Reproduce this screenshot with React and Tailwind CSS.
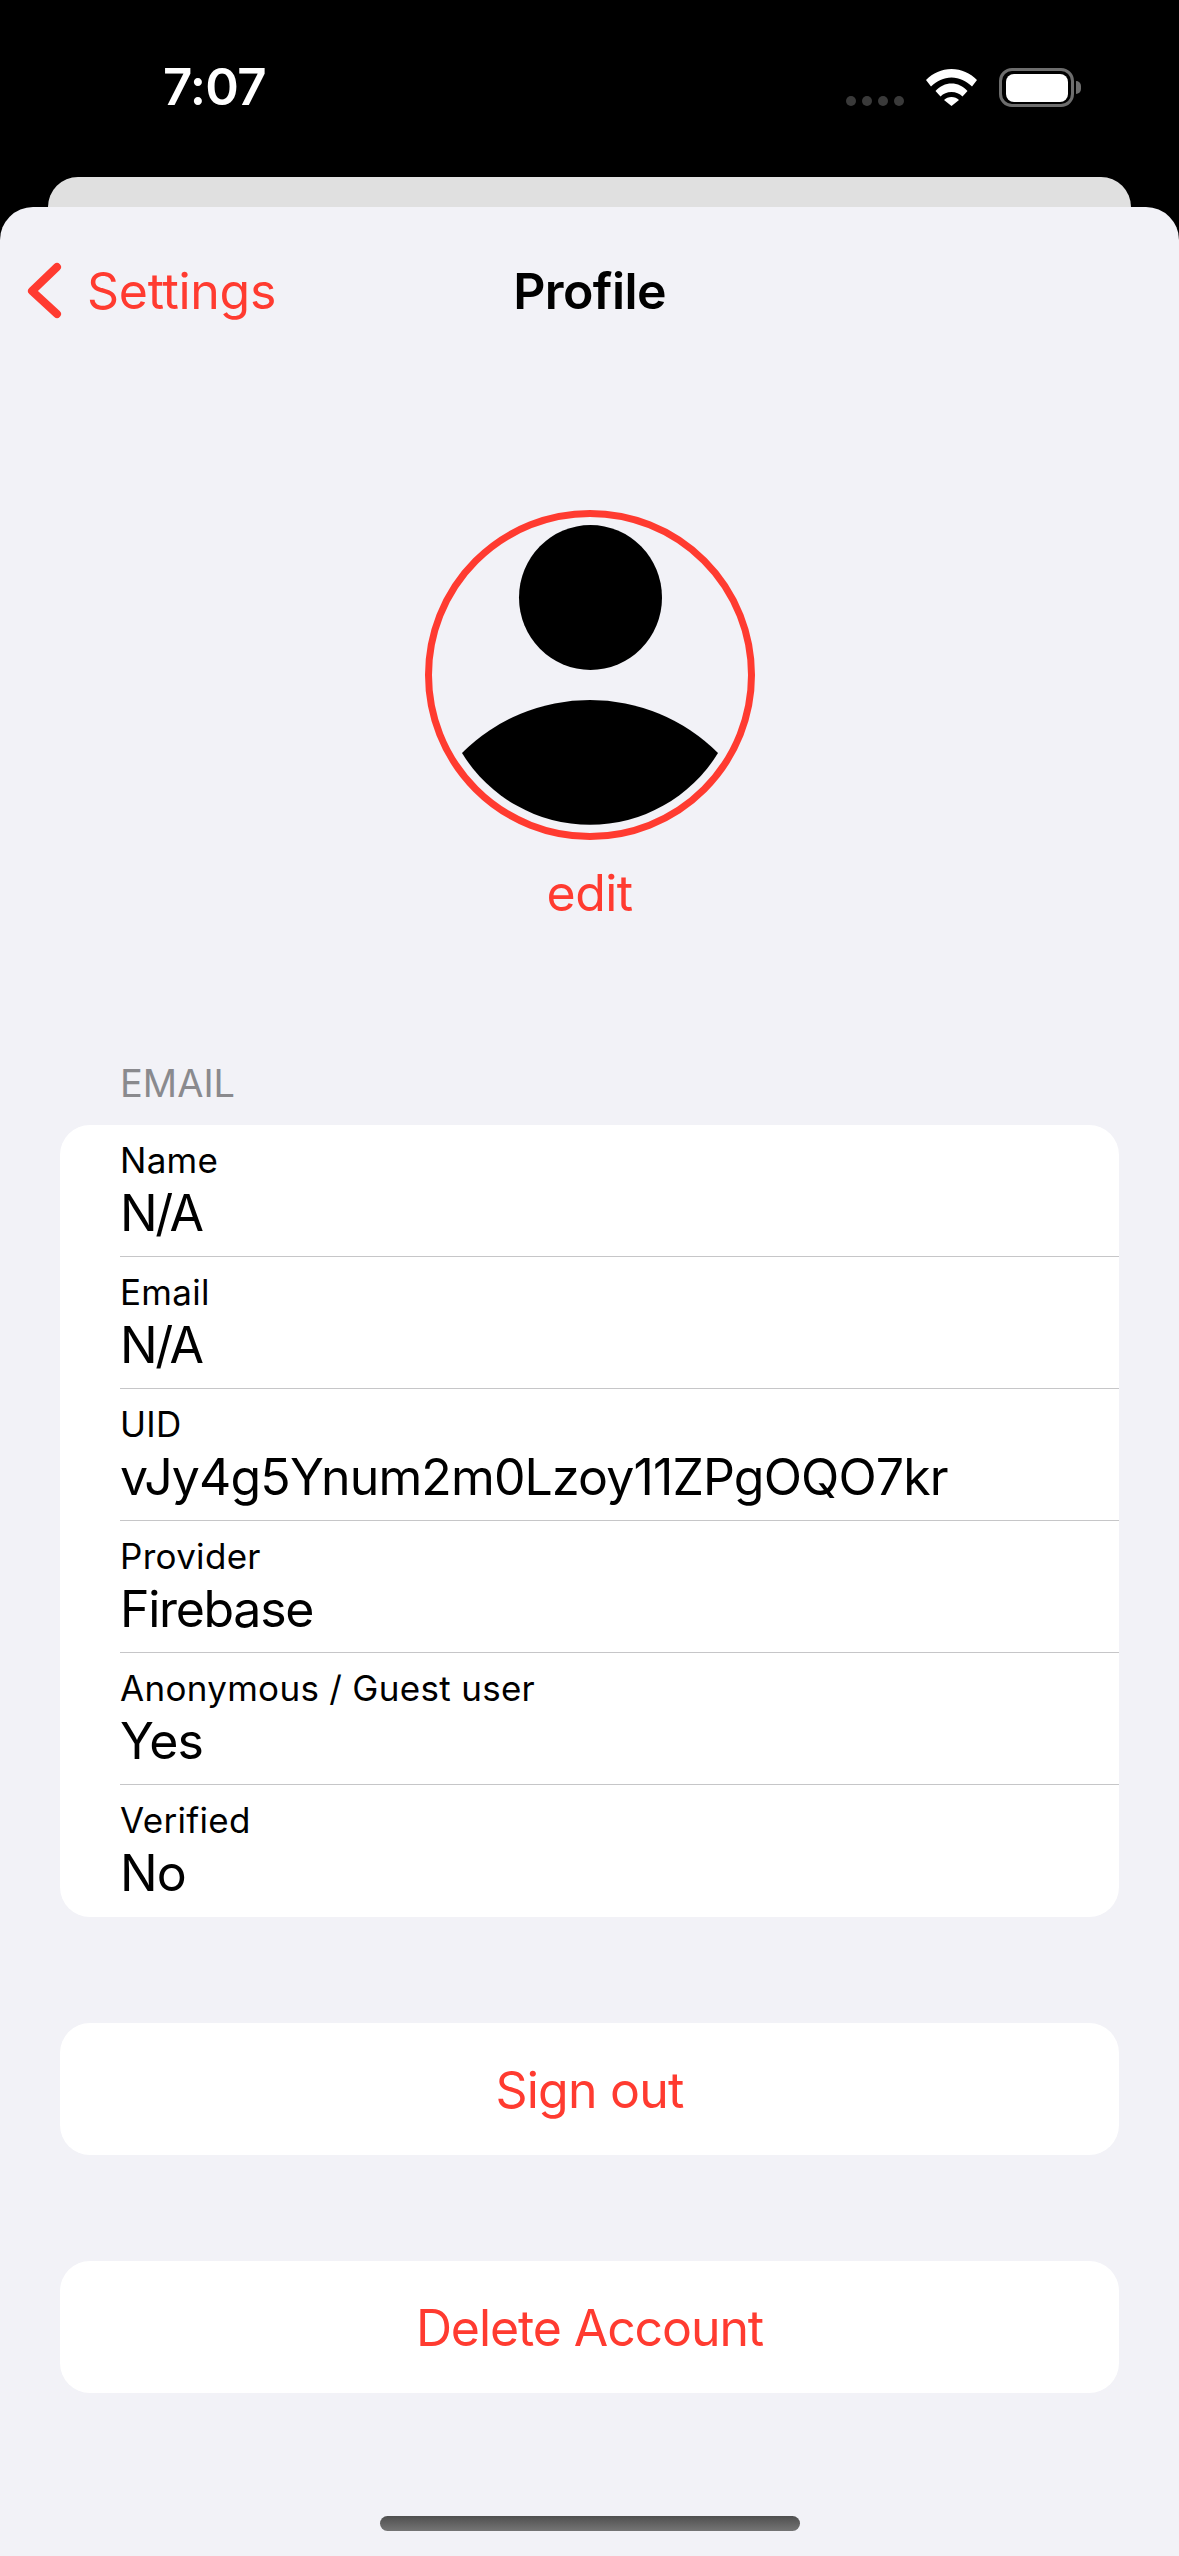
const font = { fontFamily: '"Inter", "Liberation Sans", sans-serif' };

const rows = [
  ["Name", "N/A", "tracking-[-2.5px]"],
  ["Email", "N/A", "tracking-[-2.5px]"],
  ["UID", "vJy4g5Ynum2m0Lzoy11ZPgOQO7kr", "tracking-[-0.85px]"],
  ["Provider", "Firebase", "tracking-[-1.3px]"],
  ["Anonymous / Guest user", "Yes", "tracking-[-0.9px]"],
  ["Verified", "No", "tracking-[-0.9px]"],
];

function Wifi() {
  return (
    <svg width="51" height="37" viewBox="0 0 51 37" fill="#fff">
      <path d="M0 11 C7 4 15.5 0 25.5 0 C35.5 0 44 4 51 11 L46 17.5 C40 12 33.5 8.5 25.5 8.5 C17.5 8.5 11 12 5 17.5 Z" />
      <path d="M9.5 22 C14 17 19.5 14.5 25.5 14.5 C31.5 14.5 37 17 41.5 22 L36.5 27.5 C33.5 24.5 30 23 25.5 23 C21 23 17.5 24.5 14.5 27.5 Z" />
      <path d="M18 31 C20 29 22.5 28 25.5 28 C28.5 28 31 29 33 31 L25.5 37 Z" />
    </svg>
  );
}

function Battery() {
  return (
    <div className="flex items-center">
      <div className="flex h-[39px] w-[75px] items-center justify-center rounded-[13px] border-[3px] border-[#6d6d6d]">
        <div className="h-[28px] w-[62px] rounded-[8px] bg-white" />
      </div>
      <div className="ml-[2px] h-[13px] w-[5px] rounded-r-full bg-[#6d6d6d]" />
    </div>
  );
}

function Avatar() {
  return (
    <div className="h-[330px] w-[330px] rounded-full border-[7px] border-[#ff3b30]">
      <svg className="-m-[7px] block" width="330" height="330" viewBox="0 0 330 330" fill="#000">
        <ellipse cx="165.5" cy="87.5" rx="71.5" ry="72.5" />
        <path d="M37 243 A181 181 0 0 1 293 243 A150 150 0 0 1 37 243 Z" />
      </svg>
    </div>
  );
}

export default function App() {
  return (
    <div style={font} className="flex h-[2556px] w-[1179px] flex-col overflow-hidden bg-black">
      <div className="flex h-[177px] shrink-0 items-start justify-between pl-[163px] pr-[98px] pt-[57px]">
        <span className="text-[51px] leading-[60px] font-semibold tracking-[-0.8px] text-white">7:07</span>
        <div className="flex items-start pt-[11px]">
          <div className="mr-[22px] mt-[28px] flex gap-[6px]">
            <span className="h-[10px] w-[10px] rounded-full bg-[#3a3a3a]" />
            <span className="h-[10px] w-[10px] rounded-full bg-[#3a3a3a]" />
            <span className="h-[10px] w-[10px] rounded-full bg-[#3a3a3a]" />
            <span className="h-[10px] w-[10px] rounded-full bg-[#3a3a3a]" />
          </div>
          <div className="mr-[22px] mt-[1px]"><Wifi /></div>
          <Battery />
        </div>
      </div>

      <div className="mx-[48px] h-[30px] shrink-0 rounded-t-[30px] bg-[#e0e0e0]" />

      <div className="flex flex-1 flex-col rounded-t-[33px] bg-[#f2f2f7]">
        <div className="relative flex h-[168px] shrink-0 items-start justify-center pt-[55px]">
          <div className="absolute left-[26px] top-[55px] flex items-center">
            <svg width="36" height="58" viewBox="0 0 36 58" fill="none" stroke="#ff3b30" strokeWidth="8" strokeLinecap="round" strokeLinejoin="round">
              <path d="M31 5 L6 29 L31 52" />
            </svg>
            <span className="ml-[25px] text-[50px] leading-[58px] tracking-[-0.3px] text-[#ff3b30]">Settings</span>
          </div>
          <span className="text-[50px] leading-[58px] font-semibold tracking-[-0.6px] text-black">Profile</span>
        </div>

        <div className="mt-[135px] flex flex-col items-center">
          <Avatar />
          <span className="mt-[23px] text-[50px] leading-[60px] tracking-[-0.6px] text-[#ff3b30]">edit</span>
        </div>

        <div className="mx-[60px] mt-[138px]">
          <div className="pl-[60px] text-[38px] leading-[44px] text-[#8a8a8e]">EMAIL</div>
          <div className="mt-[20px] overflow-hidden rounded-[30px] bg-white pl-[60px]">
            {rows.map(([label, value, tr], i) => (
              <div key={label} className={i < rows.length - 1 ? "h-[132px] border-b border-[#c6c6c8] pt-[14px]" : "h-[132px] pt-[14px]"}>
                <div className="text-[35px] leading-[42px] tracking-[0.3px] text-black">{label}</div>
                <div className={"mt-[2px] text-[50px] leading-[60px] text-black " + tr}>{value}</div>
              </div>
            ))}
          </div>
          <div className="mt-[106px] flex h-[132px] items-center justify-center rounded-[30px] bg-white pt-[2px] text-[50px] tracking-[-0.8px] text-[#ff3b30]">Sign out</div>
          <div className="mt-[106px] flex h-[132px] items-center justify-center rounded-[30px] bg-white pt-[2px] text-[50px] tracking-[-1.1px] text-[#ff3b30]">Delete Account</div>
        </div>

        <div className="mt-[123px] flex justify-center">
          <div className="h-[15px] w-[420px] rounded-full bg-gradient-to-b from-[#4f4f4f] to-[#757575]" />
        </div>
      </div>
    </div>
  );
}
